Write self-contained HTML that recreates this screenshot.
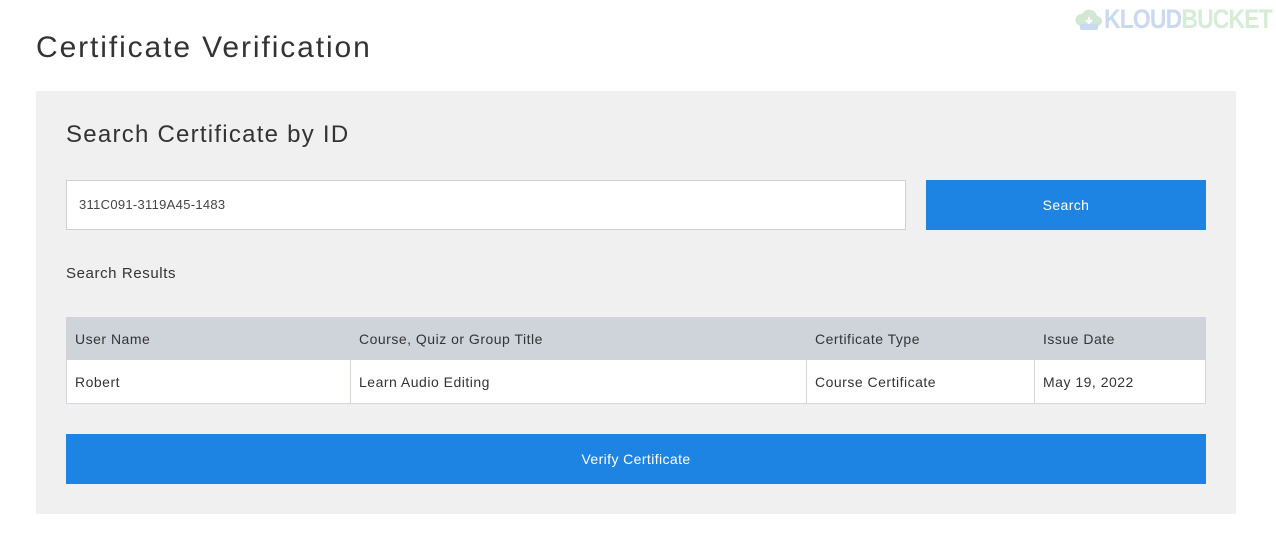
<!DOCTYPE html>
<html><head><style>
body{margin:0;width:1276px;height:543px;background:#fff;font-family:"Liberation Sans",sans-serif;color:#333;position:relative;overflow:hidden}
.a{position:absolute;white-space:nowrap}
.c{position:absolute;font-size:14px;line-height:43px;padding-left:8px;box-sizing:border-box;letter-spacing:0.5px;white-space:nowrap}
</style></head><body>
<svg class="a" style="left:1075px;top:6px" width="28" height="26" viewBox="0 0 28 26"><path d="M6 20a6 6 0 0 1 1-12a8 8 0 0 1 15 2a5 5 0 0 1 0 10z" fill="#d2e6d4"/><rect x="5" y="18" width="18" height="6" rx="2" fill="#c9d9f0"/><path d="M14 11v6M11 14l3 3 3-3" stroke="#fff" stroke-width="2" fill="none"/></svg>
<div class="a" style="left:1104px;top:4px;font-size:27px;font-weight:bold;letter-spacing:-1px;transform:scaleX(0.85);transform-origin:left"><span style="color:#c9d9f0">KLOUD</span><span style="color:#d6ecd6">BUCKET</span></div>
<div class="a" style="left:36px;top:31px;font-size:30px;color:#333;letter-spacing:1.9px">Certificate Verification</div>
<div class="a" style="left:36px;top:91px;width:1200px;height:423px;background:#f0f0f0"></div>
<div class="a" style="left:66px;top:121px;font-size:24px;letter-spacing:1.25px">Search Certificate by ID</div>
<div class="a" style="left:66px;top:180px;width:840px;height:50px;background:#fff;border:1px solid #d0d0d0;box-sizing:border-box;font-size:13px;line-height:48px;padding-left:12px;color:#444;letter-spacing:0.3px">311C091-3119A45-1483</div>
<div class="a" style="left:926px;top:180px;width:280px;height:50px;background:#1e84e3;color:#fff;font-size:14px;line-height:51px;text-align:center;letter-spacing:0.4px">Search</div>
<div class="a" style="left:66px;top:265px;font-size:15px;letter-spacing:0.6px">Search Results</div>
<div class="a" style="left:66px;top:317px;width:1140px;height:87px;border:1px solid #d4d7db;box-sizing:border-box;background:#fff"></div>
<div class="a" style="left:66px;top:317px;width:1140px;height:43px;background:#cfd4db"></div>
<div class="a" style="left:350px;top:360px;width:1px;height:44px;background:#d4d7db"></div>
<div class="a" style="left:806px;top:360px;width:1px;height:44px;background:#d4d7db"></div>
<div class="a" style="left:1034px;top:360px;width:1px;height:44px;background:#d4d7db"></div>
<div class="c" style="left:67px;top:318px">User Name</div>
<div class="c" style="left:351px;top:318px">Course, Quiz or Group Title</div>
<div class="c" style="left:807px;top:318px">Certificate Type</div>
<div class="c" style="left:1035px;top:318px">Issue Date</div>
<div class="c" style="left:67px;top:361px">Robert</div>
<div class="c" style="left:351px;top:361px">Learn Audio Editing</div>
<div class="c" style="left:807px;top:361px">Course Certificate</div>
<div class="c" style="left:1035px;top:361px">May 19, 2022</div>
<div class="a" style="left:66px;top:434px;width:1140px;height:50px;background:#1e84e3;color:#fff;font-size:14px;line-height:51px;text-align:center;letter-spacing:0.4px">Verify Certificate</div>
</body></html>
